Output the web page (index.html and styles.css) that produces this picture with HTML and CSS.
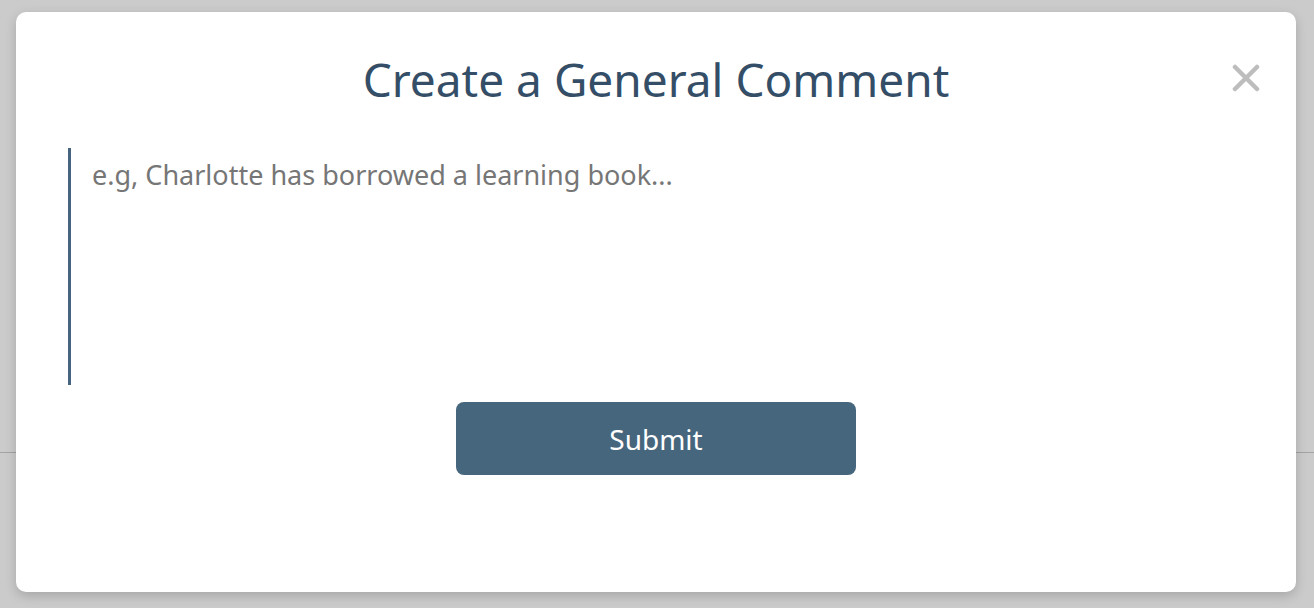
FILE: index.html
```html
<!DOCTYPE html>
<html lang="en">
<head>
<meta charset="utf-8">
<title>Create a General Comment</title>
<link rel="stylesheet" href="styles.css">
</head>
<body>
<div class="overlay">
  <div class="modal">
    <div class="modal-header">
      <h1 class="modal-title">Create a General Comment</h1>
      <button class="close-btn" aria-label="Close">
        <svg width="28" height="28" viewBox="0 0 28 28"><path d="M3 3 L25 25 M25 3 L3 25" stroke="#bdbdbd" stroke-width="4.5" stroke-linecap="round" fill="none"/></svg>
      </button>
    </div>
    <textarea class="comment-input" placeholder="e.g, Charlotte has borrowed a learning book..."></textarea>
    <div class="actions">
      <button class="submit-btn">Submit</button>
    </div>
  </div>
</div>
</body>
</html>
```
FILE: styles.css
```css
html, body {
  margin: 0;
  padding: 0;
}
body {
  width: 1314px;
  height: 608px;
  overflow: hidden;
  background:
    linear-gradient(to bottom, transparent 452px, #a3a3a3 452px, #a3a3a3 453px, transparent 453px),
    #cbcbcb;
  font-family: "Noto Sans", "Open Sans", sans-serif;
}
.overlay {
  display: flex;
  padding: 12px 18px 16px 16px;
}
.modal {
  position: relative;
  width: 1280px;
  height: 580px;
  box-sizing: border-box;
  background: #ffffff;
  border-radius: 10px;
  box-shadow: 0 4px 12px rgba(0, 0, 0, 0.18);
  padding: 0 52px;
  display: flex;
  flex-direction: column;
}
.modal-header {
  height: 136px;
  display: flex;
  align-items: flex-start;
  justify-content: center;
}
.modal-title {
  margin: 39px 0 0;
  font-size: 46px;
  font-weight: 400;
  line-height: 56px;
  color: #344e67;
  letter-spacing: 0;
}
.close-btn {
  position: absolute;
  top: 52px;
  right: 36px;
  border: 0;
  padding: 0;
  background: transparent;
  width: 28px;
  height: 28px;
  cursor: pointer;
}
.close-btn svg {
  display: block;
}
.comment-input {
  display: block;
  height: 237px;
  margin: 0;
  box-sizing: border-box;
  border: 0;
  border-left: 3px solid #46647f;
  padding: 12px 21px;
  resize: none;
  outline: none;
  font-family: inherit;
  font-size: 27px;
  line-height: 30px;
  color: #333;
}
.comment-input::placeholder {
  color: #767676;
}
.actions {
  display: flex;
  justify-content: center;
  padding-top: 17px;
}
.submit-btn {
  width: 400px;
  height: 73px;
  border: 0;
  border-radius: 8px;
  background: #46667e;
  color: #ffffff;
  font-family: inherit;
  font-size: 28px;
  cursor: pointer;
}
```
